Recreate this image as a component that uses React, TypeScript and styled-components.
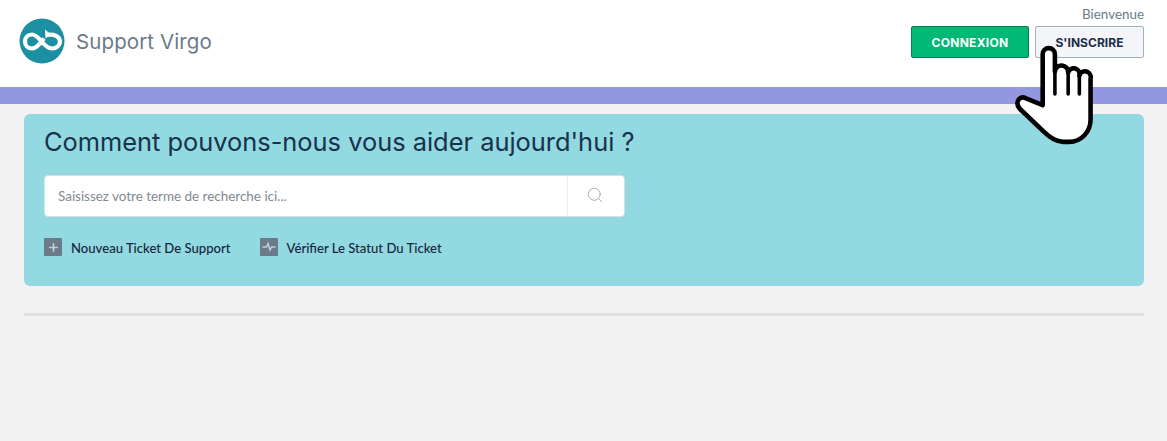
import React from "react";
import styled, { createGlobalStyle } from "styled-components";
import { Search, Plus } from "lucide-react";

const GlobalStyle = createGlobalStyle`
  html, body {
    margin: 0;
    padding: 0;
    background: #f2f2f2;
    font-family: "Lato", "Liberation Sans", sans-serif;
  }
  * { box-sizing: border-box; }
`;

const App: React.FC = () => {
  return (
    <StyledPage>
      <GlobalStyle />
      <StyledHeader>
        <StyledBrand>
          <svg width="46" height="46" viewBox="0 0 46 46">
            <circle cx="23" cy="23" r="22.5" fill="#1c8fa2" />
            <path
              d="M28 17 C35 15.5 41 18.5 41 23.5 C41 27.5 37.5 30.5 33 30.5 C28.5 30.5 25.5 27 22.5 23.5 C19.5 20 17 16.5 13 16.5 C9 16.5 6 19.5 6 23.5 C6 27.5 9 30.5 13 30.5 C17 30.5 19.5 27 22.5 23.5 L25 20.5"
              fill="none"
              stroke="#fff"
              strokeWidth="4.2"
            />
            <path d="M26 11.5 L32 16.5 L26.5 20.5 Z" fill="#fff" />
          </svg>
          <StyledBrandName>Support Virgo</StyledBrandName>
        </StyledBrand>
        <StyledAccount>
          <StyledWelcome>Bienvenue</StyledWelcome>
          <StyledButtons>
            <StyledLogin>CONNEXION</StyledLogin>
            <StyledRegister>S'INSCRIRE</StyledRegister>
          </StyledButtons>
        </StyledAccount>
      </StyledHeader>
      <StyledBand />
      <StyledContent>
        <StyledHero>
          <StyledTitle>Comment pouvons-nous vous aider aujourd'hui ?</StyledTitle>
          <StyledSearch>
            <StyledInput>Saisissez votre terme de recherche ici...</StyledInput>
            <StyledSearchButton>
              <Search size={18} strokeWidth={1.1} color="#9a9fa4" />
            </StyledSearchButton>
          </StyledSearch>
          <StyledLinks>
            <StyledLink>
              <StyledLinkIcon>
                <Plus size={13} strokeWidth={3} color="#c4ced6" />
              </StyledLinkIcon>
              Nouveau Ticket De Support
            </StyledLink>
            <StyledLink>
              <StyledLinkIcon>
                <svg width="14" height="12" viewBox="0 0 14 12">
                  <path
                    d="M0.5 6 H4.5 L6 2.5 L8 9 L9.5 6 H13.5"
                    fill="none"
                    stroke="#c4ced6"
                    strokeWidth="1.5"
                  />
                </svg>
              </StyledLinkIcon>
              Vérifier Le Statut Du Ticket
            </StyledLink>
          </StyledLinks>
        </StyledHero>
        <StyledDivider />
      </StyledContent>
      <StyledHand width="102" height="110" viewBox="0 0 100 108">
        <path
          d="M33 64 V14 a6 6 0 0 1 12 0 V31 a6.5 6.5 0 0 1 13 1 a5.5 5.5 0 0 1 11 3 a5.5 5.5 0 0 1 11 3 V78 C80 90 71 100 59 100 H53 C45 100 39 95 33 89 L11 68 C5 62 10 54 16 57 Z"
          fill="#fff"
          stroke="#000"
          strokeWidth="4.5"
          strokeLinejoin="round"
        />
        <path d="M45 31 V53 M58 32 V53 M69 35 V53" fill="none" stroke="#000" strokeWidth="3.5" strokeLinecap="round" />
      </StyledHand>
    </StyledPage>
  );
};

const StyledPage = styled.div`
  position: relative;
  min-height: 441px;
  overflow: hidden;
`;

const StyledHeader = styled.header`
  height: 87px;
  background: #fff;
  display: flex;
  justify-content: space-between;
  padding: 7px 23px 0 19px;
`;

const StyledBrand = styled.div`
  display: flex;
  align-items: center;
  gap: 11px;
  height: 68px;
`;

const StyledBrandName = styled.div`
  font-family: "Inter", "Open Sans", sans-serif;
  font-size: 20.5px;
  color: #6c7b88;
  letter-spacing: 0.1px;
`;

const StyledAccount = styled.div`
  display: flex;
  flex-direction: column;
  align-items: flex-end;
`;

const StyledWelcome = styled.div`
  font-size: 13.4px;
  line-height: 15px;
  color: #6c7b88;
  margin-bottom: 4px;
`;

const StyledButtons = styled.div`
  display: flex;
  gap: 6px;
`;

const StyledLogin = styled.button`
  width: 118px;
  height: 32px;
  border: 1px solid #0a7c50;
  border-radius: 2px;
  background: #00b976;
  color: #fff;
  font-family: "Inter", sans-serif;
  font-weight: 700;
  font-size: 12px;
  letter-spacing: 0.3px;
  padding: 0;
`;

const StyledRegister = styled(StyledLogin)`
  width: 109px;
  border-color: #a3b0bf;
  background: #f3f5f9;
  color: #1d2e4a;
  letter-spacing: 0.05px;
`;

const StyledBand = styled.div`
  height: 17px;
  background: #9297e0;
`;

const StyledContent = styled.main`
  padding: 10px 23px 0 24px;
`;

const StyledHero = styled.section`
  height: 172px;
  background: #92d9e1;
  border-radius: 6px;
  padding: 11px 20px 0;
`;

const StyledTitle = styled.h1`
  margin: 0 0 16px;
  font-family: "Inter", "Open Sans", sans-serif;
  font-weight: 400;
  font-size: 25.4px;
  line-height: 34px;
  color: #17324a;
`;

const StyledSearch = styled.div`
  display: flex;
  width: 581px;
  height: 42px;
  background: #fff;
  border: 1px solid #d9dfe4;
  border-radius: 4px;
`;

const StyledInput = styled.div`
  flex: 1;
  display: flex;
  align-items: center;
  padding-left: 13px;
  font-size: 13.5px;
  letter-spacing: -0.03px;
  color: #7f8a94;
`;

const StyledSearchButton = styled.div`
  width: 57px;
  display: flex;
  align-items: center;
  justify-content: center;
  padding: 0 3px 3px 0;
  border-left: 1px solid #e6ecef;
`;

const StyledLinks = styled.div`
  display: flex;
  gap: 29px;
  margin-top: 22px;
`;

const StyledLink = styled.a`
  display: flex;
  align-items: center;
  gap: 9px;
  height: 18px;
  font-size: 13.1px;
  font-weight: 500;
  color: #17263c;
`;

const StyledLinkIcon = styled.span`
  width: 18px;
  height: 18px;
  margin-top: -2px;
  background: #6c7b8a;
  border-radius: 1px;
  display: flex;
  align-items: center;
  justify-content: center;
`;

const StyledDivider = styled.hr`
  height: 3px;
  margin: 27px 0 0;
  border: 0;
  background: #dedede;
`;

const StyledHand = styled.svg`
  position: absolute;
  left: 1009px;
  top: 40px;
`;

export default App;
